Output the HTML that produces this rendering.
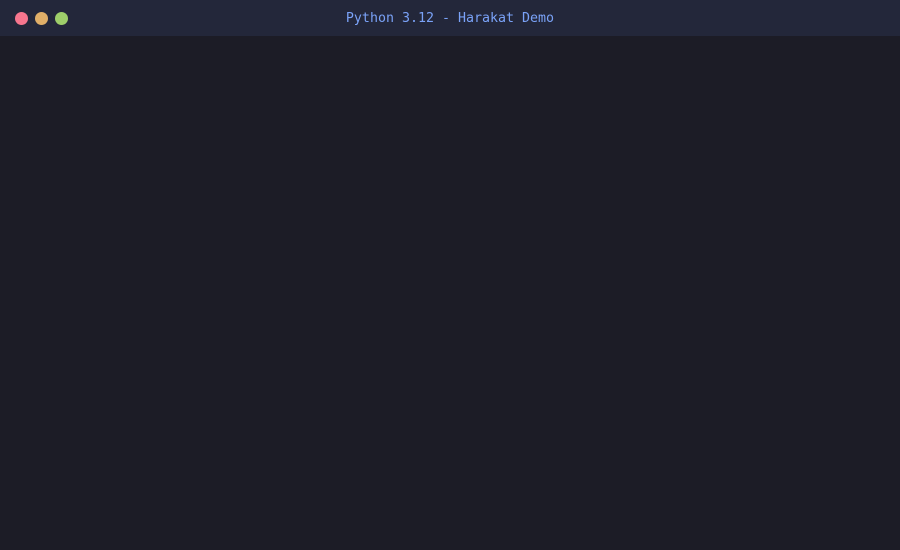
<!DOCTYPE html>
<html><head><style>
html,body{margin:0;padding:0;width:900px;height:550px;background:#1c1c26;overflow:hidden}
.bar{height:36px;background:#23273a;position:relative}
.d{position:absolute;top:12px;width:13px;height:13px;border-radius:50%}
.t{position:absolute;left:0;right:0;top:11px;text-align:center;font:13.3px "DejaVu Sans Mono","Liberation Mono",monospace;color:#7aa2f7}
</style></head><body>
<div class="bar">
<div class="d" style="left:15px;background:#f7768e"></div>
<div class="d" style="left:35px;background:#e0af68"></div>
<div class="d" style="left:55px;background:#9ece6a"></div>
<div class="t">Python 3.12 - Harakat Demo</div>
</div>
</body></html>
